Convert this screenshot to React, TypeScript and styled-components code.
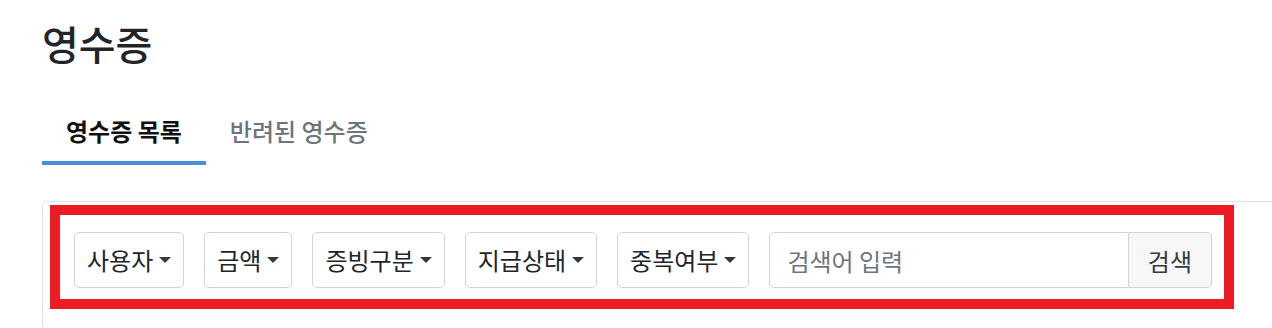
import { createGlobalStyle } from 'styled-components';
import styled from 'styled-components';

const GlobalStyle = createGlobalStyle`
  * {
    box-sizing: border-box;
  }
  body {
    margin: 0;
    overflow: hidden;
    background: #ffffff;
    color: #212529;
    font-family: 'Noto Sans CJK KR', 'Noto Sans', sans-serif;
  }
`;

const FILTERS = ['사용자', '금액', '증빙구분', '지급상태', '중복여부'];

const TABS = [
  { id: 'list', name: '영수증 목록' },
  { id: 'rejected', name: '반려된 영수증' },
];

const App = () => {
  return (
    <StyledPage>
      <GlobalStyle />
      <StyledTitle>영수증</StyledTitle>
      <StyledTabs>
        {TABS.map(({ id, name }, i) => (
          <StyledTab key={id} $active={i === 0}>
            {name}
          </StyledTab>
        ))}
      </StyledTabs>
      <StyledCard>
        <StyledHighlight>
          <StyledToolbar>
            {FILTERS.map((name) => (
              <StyledDropdownBtn key={name} type="button">
                {name}
                <StyledCaret />
              </StyledDropdownBtn>
            ))}
            <StyledSearchGroup>
              <StyledSearchInput placeholder="검색어 입력" />
              <StyledSearchBtn type="button">검색</StyledSearchBtn>
            </StyledSearchGroup>
          </StyledToolbar>
        </StyledHighlight>
      </StyledCard>
    </StyledPage>
  );
};

const StyledPage = styled.div`
  padding-left: 42px;
  width: 1320px;
`;

const StyledTitle = styled.h1`
  margin: 0;
  padding-top: 20px;
  font-size: 40px;
  font-weight: 500;
  line-height: 46px;
  color: #212529;
`;

const StyledTabs = styled.ul`
  display: flex;
  margin: 50px 0 0;
  padding: 0;
  list-style: none;
`;

const StyledTab = styled.li<{ $active: boolean }>`
  padding: 0 24px 15px;
  font-size: 24px;
  line-height: 30px;
  font-weight: ${({ $active }) => ($active ? 700 : 500)};
  color: ${({ $active }) => ($active ? '#111111' : '#6c757d')};
  border-bottom: 4px solid ${({ $active }) => ($active ? '#4a8fdc' : 'transparent')};
  cursor: pointer;
`;

const StyledCard = styled.div`
  margin-top: 36px;
  padding: 3px 7px 20px;
  border: 1px solid #dee2e6;
  border-radius: 5px;
`;

const StyledHighlight = styled.div`
  width: 1184px;
  padding: 17px 12px 11px 14px;
  border: 10px solid #ed1c24;
`;

const StyledToolbar = styled.div`
  display: flex;
  align-items: center;
  gap: 20px;
`;

const StyledDropdownBtn = styled.button`
  display: flex;
  align-items: center;
  height: 56px;
  padding: 0 12px;
  font-family: inherit;
  font-size: 24px;
  line-height: 30px;
  color: #212529;
  background: #ffffff;
  border: 1px solid #ced4da;
  border-radius: 5px;
  cursor: pointer;
`;

const StyledCaret = styled.span`
  margin-left: 6px;
  border-top: 6px solid #343a40;
  border-left: 6px solid transparent;
  border-right: 6px solid transparent;
`;

const StyledSearchGroup = styled.div`
  display: flex;
  flex: 1;
  height: 56px;
`;

const StyledSearchInput = styled.input`
  flex: 1;
  min-width: 0;
  padding: 0 17px;
  font-family: inherit;
  font-size: 24px;
  color: #212529;
  border: 1px solid #ced4da;
  border-radius: 5px 0 0 5px;
  outline: none;
  &::placeholder {
    color: #6c757d;
  }
`;

const StyledSearchBtn = styled.button`
  padding: 0 19px;
  font-family: inherit;
  font-size: 24px;
  color: #343a40;
  background: #f7f7f7;
  border: 1px solid #ced4da;
  border-left: none;
  border-radius: 0 5px 5px 0;
  cursor: pointer;
`;

export default App;
